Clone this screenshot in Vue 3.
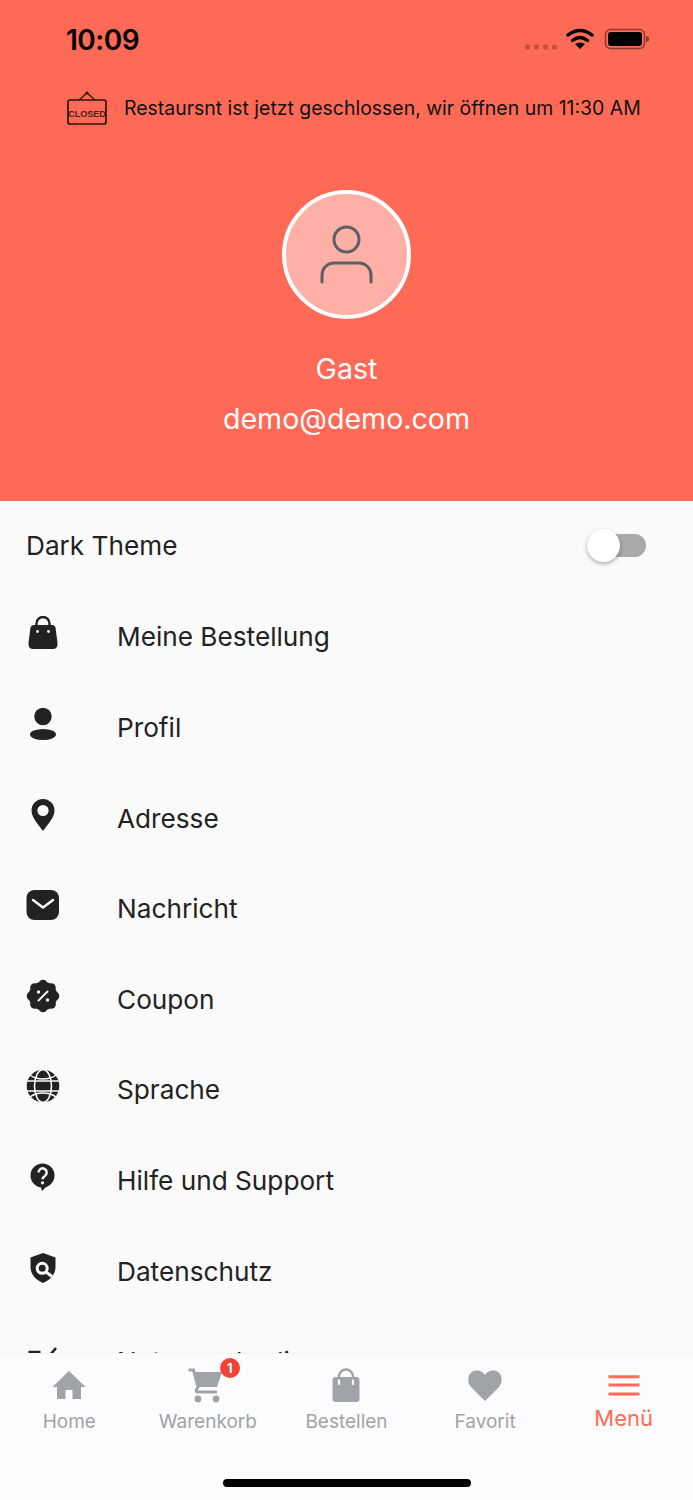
<template>
  <div class="screen">
    <header class="top">
      <div class="status-bar">
        <span class="time">10:09</span>
        <svg class="status-icons" width="125" height="30" viewBox="0 0 125 30">
          <g fill="#000" fill-opacity=".24">
            <rect x="0" y="19.5" width="5" height="5" rx="1.5" />
            <rect x="9" y="19.5" width="5" height="5" rx="1.5" />
            <rect x="18" y="19.5" width="5" height="5" rx="1.5" />
            <rect x="27" y="19.5" width="5" height="5" rx="1.5" />
          </g>
          <path d="M43 10 Q55 1 67 10" fill="none" stroke="#000" stroke-width="3.4" stroke-linecap="round" />
          <path d="M47.5 15.5 Q55 9.5 62.5 15.5" fill="none" stroke="#000" stroke-width="3.4" stroke-linecap="round" />
          <path d="M55 24 L50 19 Q55 16 60 19 Z" fill="#000" />
          <rect x="80.5" y="4.5" width="39" height="19" rx="5" fill="none" stroke="#000" stroke-opacity=".45" stroke-width="1.5" />
          <rect x="83" y="7" width="34" height="14" rx="3" fill="#000" />
          <path d="M121 11 a3 3 0 0 1 0 6 Z" fill="#000" fill-opacity=".45" />
        </svg>
      </div>

      <div class="notice">
        <svg class="closed-sign" width="40" height="34" viewBox="0 0 40 34">
          <circle cx="20" cy="2" r="1.6" fill="#2b1512" />
          <path d="M12 9 L20 2 L28 9" fill="none" stroke="#3a1a15" stroke-width="1.4" />
          <rect x="1" y="9" width="38" height="24" rx="2" fill="none" stroke="#2b1512" stroke-width="1.7" />
          <text x="20" y="25.5" text-anchor="middle" class="closed-text">CLOSED</text>
        </svg>
        <span>Restaursnt ist jetzt geschlossen, wir öffnen um 11:30 AM</span>
      </div>

      <div class="avatar">
        <svg width="60" height="70" viewBox="0 0 60 70" fill="none" stroke="#5c6064" stroke-width="3" stroke-linecap="round">
          <circle cx="29.5" cy="19.5" r="12.5" />
          <path d="M5 62 V55 a12 12 0 0 1 12-12 H42 a12 12 0 0 1 12 12 v7" />
        </svg>
      </div>
      <div class="name">Gast</div>
      <div class="email">demo@demo.com</div>
    </header>

    <main class="menu">
      <div class="row theme-row">
        <span>Dark Theme</span>
        <div class="switch"><div class="thumb"></div></div>
      </div>

      <div class="row">
        <div class="row-icon">
          <svg width="34" height="34" viewBox="0 0 34 34">
            <path d="M10.5 11 V7.5 a6.5 6.5 0 0 1 13 0 V11" fill="none" stroke="#222" stroke-width="2.4" />
            <path d="M7.5 9 H26.5 q2.5 0 3 2.5 L31.5 27 q.5 6-5 6 H7.5 q-5.5 0-5-6 L4.5 11.5 q.5-2.5 3-2.5 Z" fill="#222" />
            <circle cx="11.5" cy="15.5" r="1.4" fill="#fafafa" />
            <circle cx="22.5" cy="15.5" r="1.4" fill="#fafafa" />
          </svg>
        </div>
        <span>Meine Bestellung</span>
      </div>

      <div class="row">
        <div class="row-icon">
          <svg width="34" height="34" viewBox="0 0 34 34" fill="#222">
            <circle cx="17" cy="9.5" r="8.7" />
            <ellipse cx="17" cy="27.5" rx="13" ry="5.5" />
          </svg>
        </div>
        <span>Profil</span>
      </div>

      <div class="row">
        <div class="row-icon">
          <svg width="34" height="34" viewBox="0 0 34 34">
            <path d="M17 1 a11.5 11.5 0 0 1 11.5 11.5 c0 7-6 13-11.5 20.5 c-5.5-7.5-11.5-13.5-11.5-20.5 A11.5 11.5 0 0 1 17 1 Z" fill="#222" />
            <circle cx="17" cy="12.5" r="5.6" fill="#fafafa" />
          </svg>
        </div>
        <span>Adresse</span>
      </div>

      <div class="row">
        <div class="row-icon">
          <svg width="34" height="34" viewBox="0 0 34 34">
            <rect x="0.5" y="2" width="32.5" height="30" rx="8" fill="#222" />
            <path d="M7 12 L17 19.5 L27 12" fill="none" stroke="#fafafa" stroke-width="2.4" stroke-linecap="round" stroke-linejoin="round" />
          </svg>
        </div>
        <span>Nachricht</span>
      </div>

      <div class="row">
        <div class="row-icon">
          <svg width="34" height="34" viewBox="0 0 34 34">
            <g fill="#222">
              <circle cx="17" cy="17" r="14.3" />
              <circle cx="17" cy="5.2" r="4.5" />
              <circle cx="25.3" cy="8.7" r="4.5" />
              <circle cx="28.8" cy="17" r="4.5" />
              <circle cx="25.3" cy="25.3" r="4.5" />
              <circle cx="17" cy="28.8" r="4.5" />
              <circle cx="8.7" cy="25.3" r="4.5" />
              <circle cx="5.2" cy="17" r="4.5" />
              <circle cx="8.7" cy="8.7" r="4.5" />
            </g>
            <path d="M12.5 21.5 L21.5 12.5" stroke="#fafafa" stroke-width="2" stroke-linecap="round" />
            <circle cx="12.5" cy="13" r="1.7" fill="#fafafa" />
            <circle cx="21.5" cy="21" r="1.7" fill="#fafafa" />
          </svg>
        </div>
        <span>Coupon</span>
      </div>

      <div class="row">
        <div class="row-icon">
          <svg width="34" height="34" viewBox="0 0 34 34">
            <circle cx="17" cy="17" r="16.3" fill="#222" />
            <g fill="none" stroke="#fafafa" stroke-width="1.6">
              <ellipse cx="17" cy="17" rx="8.5" ry="16.3" />
              <path d="M0 12 H34 M0 22 H34" />
              <path d="M4 6 Q9 10 17 10 Q25 10 30 6 M4 28 Q9 24 17 24 Q25 24 30 28" />
            </g>
          </svg>
        </div>
        <span>Sprache</span>
      </div>

      <div class="row">
        <div class="row-icon">
          <svg width="34" height="34" viewBox="0 0 34 34">
            <circle cx="16.5" cy="15.5" r="12" fill="#222" />
            <path d="M14.5 26 L16 31 L22 25 Z" fill="#222" />
            <path d="M12.5 12.5 a4.1 4.1 0 1 1 6.3 3.4 c-1.6 1-2.3 1.6-2.3 3.4" fill="none" stroke="#fafafa" stroke-width="2.4" />
            <circle cx="16.5" cy="22.8" r="1.6" fill="#fafafa" />
          </svg>
        </div>
        <span>Hilfe und Support</span>
      </div>

      <div class="row">
        <div class="row-icon">
          <svg width="34" height="34" viewBox="0 0 34 34">
            <path d="M17 2 L29.5 6.5 V16 c0 8-6 13-12.5 16 C10.5 29 4.5 24 4.5 16 V6.5 Z" fill="#222" />
            <circle cx="16.2" cy="17.3" r="5" fill="none" stroke="#fafafa" stroke-width="3" />
            <path d="M20 21 L26 25.5" stroke="#fafafa" stroke-width="3" />
          </svg>
        </div>
        <span>Datenschutz</span>
      </div>

      <div class="row">
        <div class="row-icon">
          <svg width="34" height="34" viewBox="0 0 34 34" fill="none" stroke="#222" stroke-width="2.6">
            <path d="M2.5 11 H14.5 M2.5 19 H14.5 M2.5 27 H14.5" />
            <path d="M18 13 L22 16.5 L30 7" />
          </svg>
        </div>
        <span>Nutzungsbedingungen</span>
      </div>
    </main>

    <nav class="tabs">
      <div class="tab">
        <div class="tab-icon">
          <svg width="34" height="34" viewBox="0 0 34 34" fill="#a0a3a8">
            <path d="M17 3 L33.5 19 H29 V31 H20.5 V22 H13.5 V31 H5 V19 H0.5 Z" />
          </svg>
        </div>
        <span>Home</span>
      </div>
      <div class="tab">
        <div class="tab-icon">
          <svg class="cart" width="34" height="34" viewBox="0 0 34 34">
            <path d="M5 4 H32 L27 19 H9 Z" fill="#a0a3a8" />
            <path d="M-1.5 2 H3.5 L8 19 L6.5 21.5 Q5.5 24 8 24 H27" fill="none" stroke="#a0a3a8" stroke-width="3" />
            <circle cx="8" cy="31" r="3.4" fill="#a0a3a8" />
            <circle cx="26" cy="31" r="3.4" fill="#a0a3a8" />
          </svg>
          <div class="badge">1</div>
        </div>
        <span>Warenkorb</span>
      </div>
      <div class="tab">
        <div class="tab-icon">
          <svg width="34" height="34" viewBox="0 0 34 34">
            <rect x="3.5" y="9" width="27" height="25" rx="3" fill="#a0a3a8" />
            <path d="M10 11 V8.5 a7 7 0 0 1 14 0 V11" fill="none" stroke="#a0a3a8" stroke-width="2.6" />
            <path d="M10 12.5 V16 M24 12.5 V16" stroke="#fcfcfc" stroke-width="2.2" stroke-linecap="round" />
          </svg>
        </div>
        <span>Bestellen</span>
      </div>
      <div class="tab">
        <div class="tab-icon">
          <svg width="34" height="34" viewBox="0 0 34 34" fill="#a0a3a8">
            <path d="M17 33 L3 19 C-2 13 0 2.5 9 2.5 C13 2.5 16 5 17 7 C18 5 21 2.5 25 2.5 C34 2.5 36 13 31 19 Z" />
          </svg>
        </div>
        <span>Favorit</span>
      </div>
      <div class="tab active">
        <div class="tab-icon">
          <svg width="34" height="34" viewBox="0 0 34 34" stroke="#ff6a57" stroke-width="3">
            <path d="M1.5 8.7 H32.5 M1.5 17 H32.5 M1.5 26 H32.5" />
          </svg>
        </div>
        <span>Menü</span>
      </div>
      <div class="home-bar"></div>
    </nav>
  </div>
</template>

<script setup>
</script>

<style>
html, body {
  margin: 0;
  padding: 0;
}
</style>

<style scoped>
.screen {
  width: 693px;
  height: 1500px;
  display: flex;
  flex-direction: column;
  overflow: hidden;
  background-color: #fafafa;
  font-family: Inter, "Liberation Sans", sans-serif;
  color: #222;
}

.top {
  height: 501px;
  flex-shrink: 0;
  background-color: #ff6a57;
  display: flex;
  flex-direction: column;
  align-items: center;
}

.status-bar {
  width: 100%;
  height: 78px;
  box-sizing: border-box;
  padding: 0 43px 0 66px;
  display: flex;
  justify-content: space-between;
  align-items: center;
}

.time {
  margin-top: 2px;
  font-size: 28px;
  font-weight: 600;
  letter-spacing: -0.5px;
  color: #000;
}

.status-icons {
  margin-top: 2px;
}

.notice {
  width: 100%;
  height: 34px;
  margin-top: 13px;
  box-sizing: border-box;
  padding-left: 67px;
  display: flex;
  align-items: center;
  gap: 17px;
  font-size: 19.45px;
  color: #111;
  white-space: nowrap;
}

.closed-text {
  font-size: 9px;
  font-weight: 700;
  font-family: "Liberation Sans", sans-serif;
  fill: #4a1c16;
}

.avatar {
  width: 129px;
  height: 129px;
  margin-top: 65px;
  box-sizing: border-box;
  border: 4px solid #fff;
  border-radius: 50%;
  background-color: #ffb0a6;
  display: flex;
  align-items: center;
  justify-content: center;
}

.name,
.email {
  font-size: 28.6px;
  line-height: 36px;
  color: #fff;
}

.name {
  margin-top: 32px;
}

.email {
  margin-top: 14px;
}

.menu {
  flex: 1;
  min-height: 0;
  overflow: hidden;
  font-size: 26.2px;
}

.row {
  height: 90.6px;
  box-sizing: border-box;
  padding-left: 25.5px;
  display: flex;
  align-items: center;
}

.theme-row {
  padding: 0 47px 2px 26px;
  justify-content: space-between;
}

.row-icon {
  width: 91.5px;
  height: 34px;
  margin-bottom: 7px;
  flex-shrink: 0;
}

.row-icon svg {
  display: block;
}

.switch {
  position: relative;
  width: 56px;
  height: 23px;
  border-radius: 12px;
  background-color: #a9a9a9;
}

.thumb {
  position: absolute;
  left: -3px;
  top: -5px;
  width: 33px;
  height: 33px;
  border-radius: 50%;
  background-color: #fff;
  box-shadow: 0 2px 4px rgba(0, 0, 0, 0.3);
}

.tabs {
  position: relative;
  height: 147px;
  flex-shrink: 0;
  box-sizing: border-box;
  padding-top: 14px;
  border-top: 1px solid #f1f1f1;
  background-color: #fcfcfc;
  display: flex;
  align-items: flex-start;
}

.tab {
  flex: 1;
  display: flex;
  flex-direction: column;
  align-items: center;
  font-size: 19px;
  line-height: 28px;
  color: #a0a3a8;
}

.tab span {
  margin-top: 2px;
}

.tab.active {
  font-size: 22px;
  color: #ff6a57;
}

.tab.active span {
  margin-top: -2px;
}

.tab-icon {
  position: relative;
  width: 34px;
  height: 34px;
  margin-bottom: 4px;
}

.tab-icon svg {
  display: block;
  overflow: visible;
}

.cart {
  margin-left: -1px;
}

.badge {
  position: absolute;
  left: 29px;
  top: -10px;
  width: 20px;
  height: 20px;
  border-radius: 50%;
  background-color: #f44336;
  color: #fff;
  font-size: 13px;
  font-weight: 700;
  line-height: 20px;
  text-align: center;
}

.home-bar {
  position: absolute;
  left: 223px;
  top: 125px;
  width: 248px;
  height: 8px;
  border-radius: 4px;
  background-color: #000;
}
</style>
